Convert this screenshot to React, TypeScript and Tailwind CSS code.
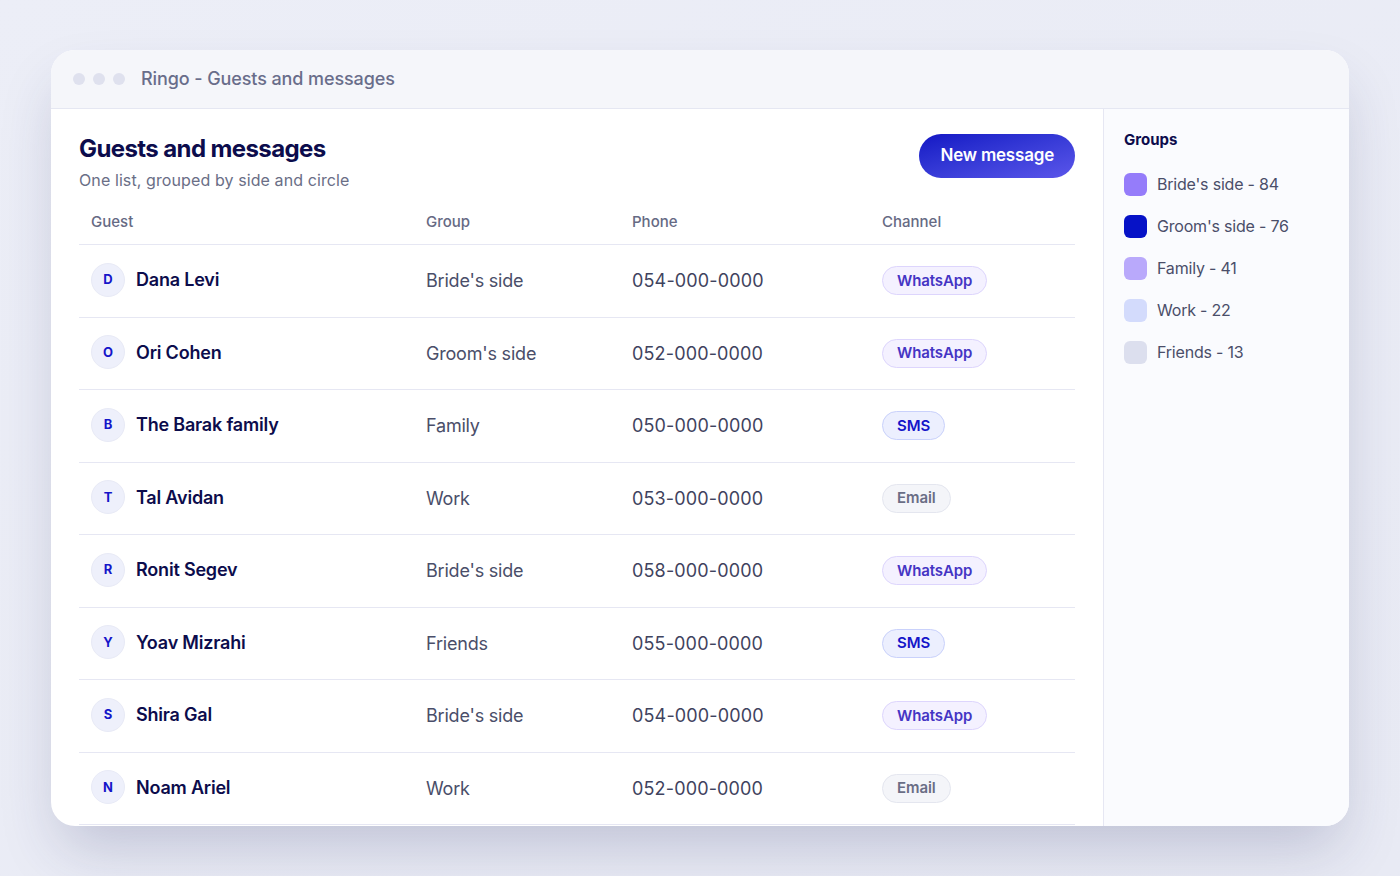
import React from "react";

type Channel = "WhatsApp" | "SMS" | "Email";
const rows: { name: string; group: string; phone: string; channel: Channel }[] = [
  { name: "Dana Levi", group: "Bride's side", phone: "054-000-0000", channel: "WhatsApp" },
  { name: "Ori Cohen", group: "Groom's side", phone: "052-000-0000", channel: "WhatsApp" },
  { name: "The Barak family", group: "Family", phone: "050-000-0000", channel: "SMS" },
  { name: "Tal Avidan", group: "Work", phone: "053-000-0000", channel: "Email" },
  { name: "Ronit Segev", group: "Bride's side", phone: "058-000-0000", channel: "WhatsApp" },
  { name: "Yoav Mizrahi", group: "Friends", phone: "055-000-0000", channel: "SMS" },
  { name: "Shira Gal", group: "Bride's side", phone: "054-000-0000", channel: "WhatsApp" },
  { name: "Noam Ariel", group: "Work", phone: "052-000-0000", channel: "Email" },
];

const groups = [
  { label: "Bride's side - 84", cls: "bg-[#957cfa]" },
  { label: "Groom's side - 76", cls: "bg-[#0612c7]" },
  { label: "Family - 41", cls: "bg-[#b9a9fb]" },
  { label: "Work - 22", cls: "bg-[#d3dbfc]" },
  { label: "Friends - 13", cls: "bg-[#dcdfee]" },
];

function Badge({ c }: { c: Channel }) {
  const cls =
    c === "WhatsApp"
      ? "bg-[#f4f1ff] border-[#ddd5fd] text-[#4535c4]"
      : c === "SMS"
      ? "bg-[#eceffe] border-[#c9d1fb] text-[#1515c9]"
      : "bg-[#f4f5f9] border-[#e4e6ef] text-[#6a6e86]";
  return (
    <span className={`inline-flex items-center h-[29px] px-[14px] rounded-full border text-[15px] font-semibold tracking-[-0.1px] ${cls}`}>
      {c}
    </span>
  );
}

export default function App() {
  return (
    <div
      className="w-[1400px] h-[876px] overflow-hidden bg-gradient-to-br from-[#eceef7] to-[#e8eaf4] pt-[50px]"
      style={{ fontFamily: "Inter, 'Noto Sans', sans-serif" }}
    >
      <div className="ml-[51px] w-[1298px] h-[776px] rounded-[24px] overflow-hidden bg-white shadow-[0_30px_60px_-10px_rgba(40,44,100,0.22)] flex flex-col">
        {/* title bar */}
        <div className="h-[59px] shrink-0 bg-[#f5f6fa] border-b border-[#e5e7f2] flex items-center pl-[22px]">
          <div className="flex gap-[8px]">
            <span className="w-[12px] h-[12px] rounded-full bg-[#dfe1ee]" />
            <span className="w-[12px] h-[12px] rounded-full bg-[#dfe1ee]" />
            <span className="w-[12px] h-[12px] rounded-full bg-[#dfe1ee]" />
          </div>
          <span className="ml-[16px] text-[18px] font-medium text-[#696d8a] leading-none tracking-[-0.1px]">Ringo - Guests and messages</span>
        </div>
        <div className="flex flex-1 min-h-0">
          {/* main */}
          <div className="w-[1052px] shrink-0 px-7 pt-6">
            <div className="flex items-start justify-between">
              <div>
                <h1 className="text-[24px] leading-[32px] font-bold text-[#0c0c4c] tracking-[-0.6px]">Guests and messages</h1>
                <p className="mt-[3px] text-[16px] leading-[24px] text-[#6a6e86] tracking-[0.1px]">One list, grouped by side and circle</p>
              </div>
              <button className="mt-[1px] h-[44px] px-[21px] rounded-full bg-gradient-to-br from-[#1414c4] to-[#5b55ea] text-white text-[17px] font-semibold tracking-[-0.2px]">
                New message
              </button>
            </div>
            <div className="mt-[12px]">
              <div className="grid grid-cols-[335px_206px_250px_1fr] h-[41px] items-center pb-[4px] border-b border-[#e6e7f3] text-[15px] font-medium text-[#666a84]">
                <div className="pl-3">Guest</div>
                <div className="pl-3">Group</div>
                <div className="pl-3">Phone</div>
                <div className="pl-3">Channel</div>
              </div>
              {rows.map((r) => (
                <div
                  key={r.name + r.phone}
                  className="grid grid-cols-[335px_206px_250px_1fr] h-[72.5px] items-center border-b border-[#e6e7f3]"
                >
                  <div className="pl-3 flex items-center gap-[11px] -mt-[2px]">
                    <span className="w-[34px] h-[34px] rounded-full bg-[#eef0fb] border border-[#e8eaf6] flex items-center justify-center text-[13px] font-bold text-[#1515c9]">
                      {r.name === "The Barak family" ? "B" : r.name[0]}
                    </span>
                    <span className="text-[18px] font-semibold text-[#0c0c4c] tracking-[-0.2px]">{r.name}</span>
                  </div>
                  <div className="pl-3 text-[18px] text-[#4a4e69] tracking-[-0.2px]">{r.group}</div>
                  <div className="pl-3 text-[18px] text-[#3f435e] tracking-[0.15px]">{r.phone}</div>
                  <div className="pl-3">
                    <Badge c={r.channel} />
                  </div>
                </div>
              ))}
            </div>
          </div>
          {/* sidebar */}
          <div className="flex-1 bg-[#fafbfe] border-l border-[#e6e7f3] pl-[20px] pt-[21px]">
            <div className="text-[15px] leading-[20px] font-bold text-[#0c0c4c]">Groups</div>
            <div className="mt-[13px] flex flex-col">
              {groups.map((g) => (
                <div key={g.label} className="h-[42px] flex items-center gap-[10px]">
                  <span className={`w-[23px] h-[23px] rounded-[6px] ${g.cls}`} />
                  <span className="text-[16px] text-[#4a4e69] tracking-[-0.2px]">{g.label}</span>
                </div>
              ))}
            </div>
          </div>
        </div>
      </div>
    </div>
  );
}
